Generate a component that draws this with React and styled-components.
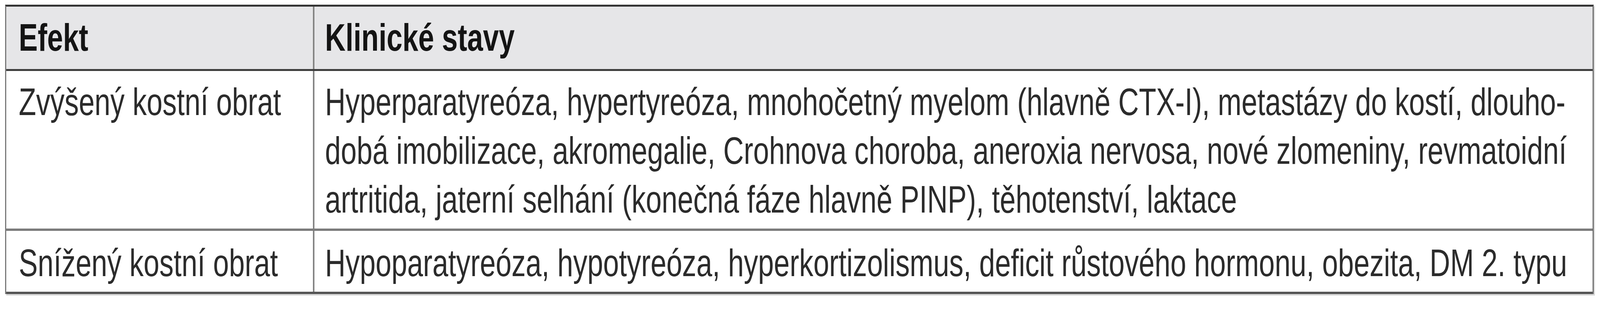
import styled, { createGlobalStyle } from 'styled-components';

// The reference is 5515px wide and 800px tall. Widths are scaled to the viewport
// width, heights stay in px, and text is squeezed by the same horizontal factor.
const REF_W = 5515;
const u = (px) => `${((px * 100) / REF_W).toFixed(4)}vw`;
const squeeze = typeof window !== 'undefined' ? Math.min(1, window.innerWidth / REF_W) : 1;

const GlobalStyle = createGlobalStyle`
  html, body {
    margin: 0;
    padding: 0;
    background: #ffffff;
    overflow: hidden;
  }
  body {
    font-family: "Liberation Sans", Arial, Helvetica, sans-serif;
  }
`;

const rows = [
  {
    effect: 'Zvýšený kostní obrat',
    lines: [
      'Hyperparatyreóza, hypertyreóza, mnohočetný myelom (hlavně CTX-I), metastázy do kostí, dlouho-',
      'dobá imobilizace, akromegalie, Crohnova choroba, aneroxia nervosa, nové zlomeniny, revmatoidní',
      'artritida, jaterní selhání (konečná fáze hlavně PINP), těhotenství, laktace',
    ],
    line: '#7c7c7c',
    top: 17,
    bottom: 12,
  },
  {
    effect: 'Snížený kostní obrat',
    lines: [
      'Hypoparatyreóza, hypotyreóza, hyperkortizolismus, deficit růstového hormonu, obezita, DM 2. typu',
    ],
    line: '#555555',
    top: 20,
    bottom: 11,
  },
];

const Page = styled.div`
  padding: 12px 0 20px ${u(17)};
`;

const Table = styled.div`
  width: ${u(5476)};
  box-sizing: border-box;
  border-top: 5px solid #353535;
  border-left: ${u(5)} solid #7a7a7a;
  border-right: ${u(5)} solid #6e6e6e;
  box-shadow: ${u(4)} 4px 0 #dadada;
`;

const Row = styled.div`
  display: grid;
  grid-template-columns: ${u(1058)} minmax(0, 1fr);
  background: ${(p) => (p.$head ? '#e6e6e8' : '#ffffff')};
  border-bottom: ${(p) => p.$weight || 6}px solid ${(p) => p.$line};
`;

const Cell = styled.div`
  min-width: 0;
  padding: ${(p) => p.$top}px 0 ${(p) => p.$bottom}px ${(p) => u(p.$divider ? 36 : 44)};
  border-left: ${(p) => (p.$divider ? `${u(6)} solid #858585` : 'none')};
  font-weight: ${(p) => (p.$head ? 700 : 400)};
  color: ${(p) => (p.$head ? '#141414' : '#2b2b2b')};
`;

const Line = styled.div`
  width: max-content;
  font-size: 98px;
  line-height: 125px;
  white-space: nowrap;
  transform: scaleX(${(p) => p.$sx});
  transform-origin: 0 50%;
`;

export default function App() {
  return (
    <>
      <GlobalStyle />
      <Page>
        <Table>
          <Row $head $line="#3d3d3d" $weight={5}>
            <Cell $head $top={17} $bottom={18}>
              <Line $sx={squeeze}>Efekt</Line>
            </Cell>
            <Cell $head $divider $top={17} $bottom={18}>
              <Line $sx={squeeze}>Klinické stavy</Line>
            </Cell>
          </Row>
          {rows.map((r) => (
            <Row key={r.effect} $line={r.line}>
              <Cell $top={r.top} $bottom={r.bottom}>
                <Line $sx={squeeze}>{r.effect}</Line>
              </Cell>
              <Cell $divider $top={r.top} $bottom={r.bottom}>
                {r.lines.map((l) => (
                  <Line key={l} $sx={squeeze}>{l}</Line>
                ))}
              </Cell>
            </Row>
          ))}
        </Table>
      </Page>
    </>
  );
}
